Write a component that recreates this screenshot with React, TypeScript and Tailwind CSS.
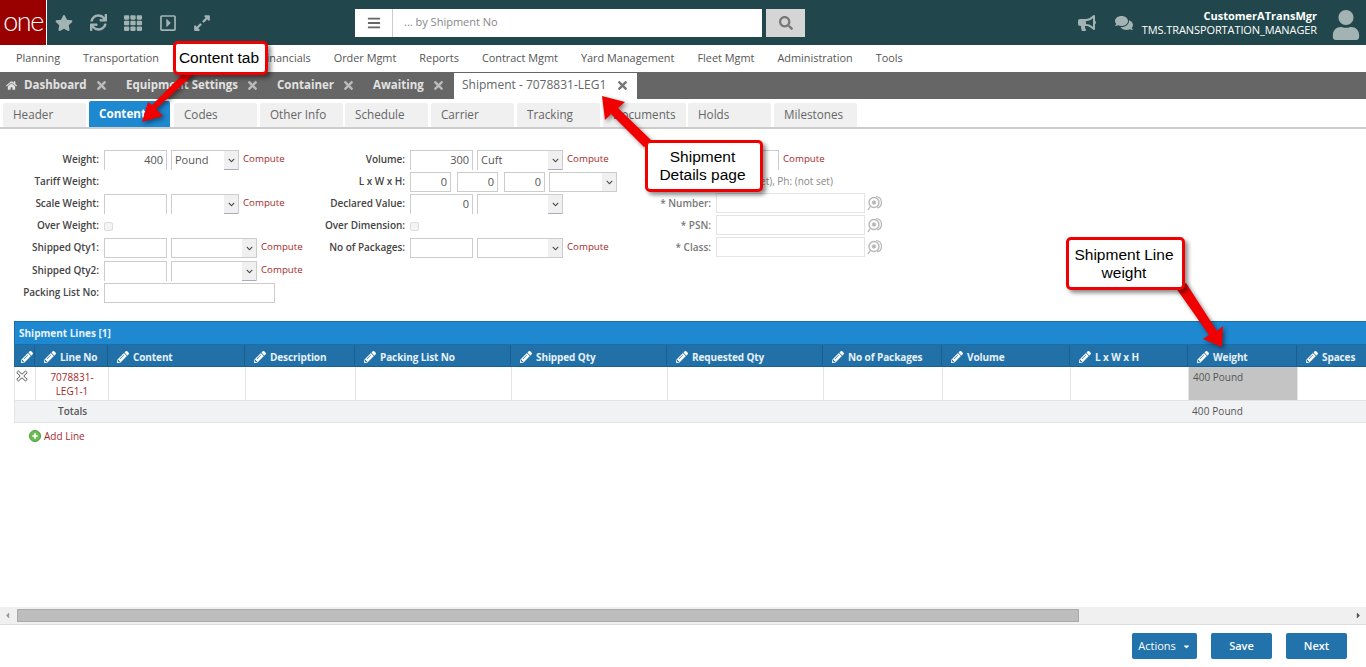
import React from "react";
import { FaStar, FaSync, FaTh, FaRegCaretSquareRight, FaExpandAlt, FaBullhorn, FaComments, FaUser, FaBars, FaSearch, FaPencilAlt, FaHome, FaTimes, FaChevronDown, FaCaretDown, FaCaretLeft, FaCaretRight } from "react-icons/fa";

const nav: [string, string][] = [["Planning", ""], ["Transportation", ""], ["", "w-[56px]"], ["Financials", ""], ["Order Mgmt", ""], ["Reports", ""], ["Contract Mgmt", ""], ["Yard Management", ""], ["Fleet Mgmt", ""], ["Administration", ""], ["Tools", ""]];
const subTabs: [string, string][] = [["Header", "w-[83px] mr-[3px]"], ["Content", "w-[81px] mr-[4px]"], ["Codes", "w-[83px] mr-[3px]"], ["Other Info", "w-[83px] mr-[2px]"], ["Schedule", "w-[83px] mr-[3px]"], ["Carrier", "w-[83px] mr-[3px]"], ["Tracking", "w-[83px] mr-[3px]"], ["Documents", "w-[83px] mr-[2px]"], ["Holds", "w-[83px] mr-[3px]"], ["Milestones", "w-[83px]"]];
const cols: [string, string][] = [["", "w-[20px]"], ["Line No", "w-[73px]"], ["Content", "w-[137px]"], ["Description", "w-[110px]"], ["Packing List No", "w-[156px]"], ["Shipped Qty", "w-[156px]"], ["Requested Qty", "w-[156px]"], ["No of Packages", "w-[119px]"], ["Volume", "w-[128px]"], ["L x W x H", "w-[118px]"], ["Weight", "w-[109px]"], ["Spaces", "w-[80px]"]];

function Label({ children, w }: { children?: React.ReactNode; w: string }) {
  return <div className={`${w} mr-[5px] text-right text-[10px] font-semibold text-[#444] leading-[19px] shrink-0 tracking-[-0.03px]`}>{children}</div>;
}
function Input({ v, w, open }: { v?: string; w: string; open?: boolean }) {
  return <div className={`${w} h-[20px] border border-[#ccc] ${open ? "border-b-0" : ""} bg-white text-right pr-[3px] text-[11px] leading-[18px] text-[#555] shrink-0`}>{v}</div>;
}
function Select({ v, w, open }: { v?: string; w: string; open?: boolean }) {
  return (
    <div className={`${w} h-[20px] border border-[#ccc] ${open ? "border-b-0" : ""} bg-white flex ml-[4px] shrink-0`}>
      <div className="flex-1 pl-[3px] text-[11px] leading-[18px] text-[#555]">{v}</div>
      <div className={`w-[14px] bg-[#f0f0f0] flex items-center justify-center ${open ? "border-b border-[#aab]" : ""}`}><FaChevronDown className="text-[#444] text-[7px]" /></div>
    </div>
  );
}
function Compute() {
  return <span className="ml-[4px] text-[9.7px] text-[#a52a2a] leading-[18px] self-start">Compute</span>;
}
function Target() {
  return (
    <svg width="15" height="16" viewBox="0 0 15 16" className="ml-[2px] shrink-0" fill="none" stroke="#b8b8b8">
      <path d="M9 1.5 A6 6 0 0 1 14.5 7 A6 6 0 0 1 10 13" strokeWidth="1.2" />
      <circle cx="7" cy="7.5" r="5" strokeWidth="1.4" />
      <circle cx="7" cy="7.5" r="1.8" fill="#b8b8b8" strokeWidth="0.8" />
      <path d="M3.2 11.5 L1 15" strokeWidth="1.4" />
    </svg>
  );
}
function HazRow({ label, mt }: { label: string; mt: string }) {
  return (
    <div className={`flex items-center ${mt}`}>
      <div className="w-[52px] mr-[5px] text-right text-[10px] font-semibold text-[#777] shrink-0 whitespace-nowrap">{label}</div>
      <div className="w-[149px] h-[20px] border border-[#e4e4e4] bg-white" />
      <Target />
    </div>
  );
}
function Check() {
  return <div className="w-[9px] h-[9px] mt-[6px] border border-[#ddd] rounded-[2px] bg-[#f4f4f4]" />;
}
function Callout({ className, children }: { className: string; children: React.ReactNode }) {
  return (
    <div className={`absolute bg-white border-[3px] border-[#f00000] rounded-[5px] shadow-[3px_3px_4px_rgba(0,0,0,0.45)] flex items-center justify-center text-center text-[15.5px] leading-[18px] text-black font-['Liberation_Sans',sans-serif] ${className}`}>
      {children}
    </div>
  );
}

export default function App() {
  return (
    <div className="relative w-[1366px] h-[667px] overflow-hidden bg-white font-['Open_Sans',sans-serif] flex flex-col">
      {/* top bar */}
      <header className="h-[45px] bg-[#21474d] flex items-center shrink-0">
        <div className="w-[46px] h-[45px] bg-[#990000] flex items-center justify-center text-white text-[27px] tracking-[-1.5px] font-['Lato',sans-serif] font-light pb-[3px] shrink-0">one</div>
        <div className="w-[1px] h-[45px] bg-white shrink-0" />
        <div className="flex items-center text-[#a3b3b3] ml-[8px]">
          <FaStar className="text-[18px]" />
          <FaSync className="text-[17px] ml-[17px]" />
          <FaTh className="text-[18px] ml-[17px]" />
          <FaRegCaretSquareRight className="text-[18px] ml-[17px]" />
          <FaExpandAlt className="text-[18px] ml-[16px]" />
        </div>
        <div className="ml-[144px] w-[407px] h-[28px] bg-white flex items-center">
          <div className="w-[38px] h-[28px] border-r border-[#ccc] flex items-center justify-center text-[#666]"><FaBars className="text-[14px]" /></div>
          <span className="ml-[11px] pb-[1px] text-[11px] text-[#888]">... by Shipment No</span>
        </div>
        <div className="ml-[4px] w-[39px] h-[28px] bg-[#d5d5d5] flex items-center justify-center text-[#777]"><FaSearch className="text-[14px]" /></div>
        <div className="flex items-center text-[#a3b3b3] ml-[273px]">
          <FaBullhorn className="text-[18px]" />
          <FaComments className="text-[18px] ml-[19px]" />
        </div>
        <div className="ml-auto text-right text-white text-[11px] leading-[14px] mr-[14px]">
          <div className="font-bold">CustomerATransMgr</div>
          <div className="tracking-[-0.1px]">TMS.TRANSPORTATION_MANAGER</div>
        </div>
        <FaUser className="text-[#a3b3b3] text-[30px] mr-[5px] mt-[5px]" />
      </header>

      {/* main nav */}
      <nav className="h-[27px] flex items-center pl-[16px] gap-[23px] text-[10.9px] text-[#555] shrink-0 pb-[1px]">
        {nav.map(([n, w], i) => <span key={i} className={`${w} whitespace-nowrap`}>{n}</span>)}
      </nav>

      {/* open tabs */}
      <div className="h-[27px] bg-[#666] flex items-end pl-[6px] shrink-0">
        <div className="h-[26px] flex items-center pb-[2px] text-[#e2e2e2] font-bold text-[11.5px] whitespace-nowrap">
          <FaHome className="text-[11px] mr-[7px]" />
          <span className="w-[62px]">Dashboard</span>
          <FaTimes className="text-[13px] text-[#bbb] ml-[9px] mr-[18px]" />
          <span className="w-[111px]">Equipment Settings</span>
          <FaTimes className="text-[13px] text-[#bbb] ml-[9px] mr-[18px]" />
          <span className="w-[56px]">Container</span>
          <FaTimes className="text-[13px] text-[#bbb] ml-[9px] mr-[18px]" />
          <span className="w-[50px]">Awaiting</span>
          <FaTimes className="text-[13px] text-[#bbb] ml-[9px] mr-[9px]" />
        </div>
        <div className="w-[183px] h-[26px] bg-white flex items-center pb-[2px] pl-[8px] text-[12px] text-[#666] whitespace-nowrap">
          <span className="w-[144px]">Shipment - 7078831-LEG1</span>
          <FaTimes className="text-[13px] text-[#777] ml-[10px]" />
        </div>
      </div>

      {/* sub tabs */}
      <div className="h-[30px] border-b-2 border-[#ccc] flex items-end pl-[3px] shrink-0">
        {subTabs.map(([t, w]) => (
          <div key={t} className={`${w} rounded-t-[2px] text-[11.7px] shrink-0 ${t === "Content" ? "bg-[#1e88d0] text-white font-bold pl-[10px] h-[26px] leading-[24px]" : "bg-[#f0f0f0] text-[#666] pl-[10px] h-[24px] leading-[22px]"}`}>{t}</div>
        ))}
      </div>

      {/* form */}
      <div className="h-[192px] flex pt-[21px] shrink-0">
        <div className="w-[319px] shrink-0 flex flex-col">
          <div className="flex h-[20px]"><Label w="w-[99px]">Weight:</Label><Input v="400" w="w-[63px]" open /><Select v="Pound" w="w-[68px]" open /><Compute /></div>
          <div className="flex h-[20px] mt-[2px]"><Label w="w-[99px]">Tariff Weight:</Label></div>
          <div className="flex h-[20px] mt-[2px]"><Label w="w-[99px]">Scale Weight:</Label><Input w="w-[63px]" open /><Select w="w-[68px]" open /><Compute /></div>
          <div className="flex h-[20px] mt-[2px]"><Label w="w-[99px]">Over Weight:</Label><Check /></div>
          <div className="flex h-[20px] mt-[2px]"><Label w="w-[99px]">Shipped Qty1:</Label><Input w="w-[63px]" /><Select w="w-[86px]" /><Compute /></div>
          <div className="flex h-[20px] mt-[3px]"><Label w="w-[99px]">Shipped Qty2:</Label><Input w="w-[63px]" open /><Select w="w-[86px]" open /><Compute /></div>
          <div className="flex h-[20px] mt-[2px]"><Label w="w-[99px]">Packing List No:</Label><Input w="w-[171px]" /></div>
        </div>
        <div className="w-[340px] shrink-0 flex flex-col">
          <div className="flex h-[20px]"><Label w="w-[86px]">Volume:</Label><Input v="300" w="w-[63px]" open /><Select v="Cuft" w="w-[86px]" open /><Compute /></div>
          <div className="flex h-[20px] mt-[2px]">
            <Label w="w-[86px]">L x W x H:</Label><Input v="0" w="w-[41px]" /><div className="w-[6px]" /><Input v="0" w="w-[41px]" /><div className="w-[6px]" /><Input v="0" w="w-[41px]" /><Select w="w-[68px]" />
          </div>
          <div className="flex h-[20px] mt-[2px]"><Label w="w-[86px]">Declared Value:</Label><Input v="0" w="w-[63px]" open /><Select w="w-[86px]" open /></div>
          <div className="flex h-[20px] mt-[2px]"><Label w="w-[86px]">Over Dimension:</Label><Check /></div>
          <div className="flex h-[20px] mt-[2px]"><Label w="w-[86px]">No of Packages:</Label><Input w="w-[63px]" /><Select w="w-[86px]" /><Compute /></div>
        </div>
        <div className="flex-1 flex flex-col">
          <div className="flex h-[20px] pl-[100px]"><div className="w-[20px] h-[20px] border border-[#ccc] border-b-0 border-l-0" /><Compute /></div>
          <div className="h-[20px] pl-[75px] text-[10px] leading-[22px] text-[#888]">(not set), Ph: (not set)</div>
          <HazRow label="* Number:" mt="mt-[3px]" />
          <HazRow label="* PSN:" mt="mt-[2px]" />
          <HazRow label="* Class:" mt="mt-[2px]" />
        </div>
      </div>

      {/* grid */}
      <div className="ml-[14px] w-[1352px] overflow-hidden shrink-0">
        <div className="h-[24px] bg-[#1e88d0] border border-[#1a6fa8] border-r-0 pl-[4px] text-[10px] font-bold text-[#e8f4fc] leading-[22px]">Shipment Lines [1]</div>
        <div className="h-[22px] bg-[#2270a8] border-b border-[#1a5f90] flex pl-[1px] w-[1400px]">
          {cols.map(([c, w], i) => (
            <div key={i} className={`${w} shrink-0 border-r border-[#1a5f90] flex items-center pt-[3px] text-[10px] font-bold tracking-[-0.1px] text-[#e8f2f8] whitespace-nowrap ${i === 0 ? "justify-end pr-[1px]" : "pl-[9px]"}`}>
              <FaPencilAlt className={`text-[12px] text-white ${i === 0 ? "" : "mr-[4px]"}`} />{c}
            </div>
          ))}
        </div>
        <div className="h-[34px] flex pl-[1px] w-[1400px] border-l border-[#e4e4e4] border-b border-b-[#e4e4e4]">
          {cols.map(([c, w], i) => (
            <div key={i} className={`${w} shrink-0 ${i === cols.length - 1 ? "" : "border-r border-[#e4e4e4]"} text-[10px] leading-[14px] text-[#555] ${i === 10 ? "bg-[#c4c4c4] pl-[4px] pt-[3px]" : ""} ${i === 1 ? "text-center text-[#a52a2a] pt-[3px]" : ""}`}>
              {i === 0 && (
                <svg width="12" height="12" viewBox="0 0 12 12" className="mt-[3px]" fill="none" stroke="#555" strokeWidth="1">
                  <path d="M2.5 1 L6 4.2 L9.5 1 L11.2 2.6 L7.8 6 L11.2 9.4 L9.5 11 L6 7.8 L2.5 11 L0.8 9.4 L4.2 6 L0.8 2.6 Z" />
                </svg>
              )}
              {i === 1 && <>7078831-<br />LEG1-1</>}
              {i === 10 && "400 Pound"}
            </div>
          ))}
        </div>
        <div className="h-[22px] bg-[#f1f2f4] border-b border-l border-[#e4e4e4] flex items-center text-[10px] text-[#555] w-[1400px]">
          <span className="ml-[43px] w-[1134px] font-semibold">Totals</span>
          <span className="tracking-[0.1px]">400 Pound</span>
        </div>
      </div>
      <div className="flex items-center ml-[29px] mt-[6px] h-[14px] shrink-0">
        <svg width="12" height="12" viewBox="0 0 13 13">
          <circle cx="6.5" cy="6.5" r="6" fill="#6cbb55" stroke="#4b9a3a" />
          <path d="M6.5 3.5 V9.5 M3.5 6.5 H9.5" stroke="#fff" strokeWidth="1.8" />
        </svg>
        <span className="ml-[3px] text-[10px] text-[#a52a2a]">Add Line</span>
      </div>

      <div className="flex-1" />

      {/* scrollbar */}
      <div className="h-[18px] bg-[#f0f0f0] border-b border-[#ddd] flex items-center shrink-0">
        <FaCaretLeft className="text-[9px] text-[#999] ml-[3px]" />
        <div className="ml-[5px] w-[1062px] h-[13px] bg-[#bdbdbd] border border-[#aaa]" />
        <FaCaretRight className="text-[9px] text-[#555] ml-auto mr-[3px]" />
      </div>

      {/* footer */}
      <div className="h-[42px] flex justify-end items-center pr-[19px] shrink-0">
        <div className="w-[65px] h-[26px] mr-[14px] bg-[#2272ab] rounded-[2px] text-white text-[11px] flex items-center justify-center">Actions<FaCaretDown className="text-[9px] ml-[6px]" /></div>
        <div className="w-[61px] h-[26px] mr-[14px] bg-[#2272ab] rounded-[2px] text-white text-[11px] flex items-center justify-center font-semibold">Save</div>
        <div className="w-[61px] h-[26px] bg-[#2272ab] rounded-[2px] text-white text-[11px] flex items-center justify-center font-semibold">Next</div>
      </div>

      {/* annotation arrows */}
      <svg className="absolute left-0 top-0 pointer-events-none drop-shadow-[2px_2px_2px_rgba(0,0,0,0.45)]" width="1366" height="667">
        <g fill="#f00000">
          <path d="M187 70 L193 75 L156 109 L163 116 L142 122 L148 102 L152 105 Z" />
          <path d="M602 96 L625 102 L618 108 L652 141 L644 147 L611 114 L605 120 Z" />
          <path d="M1176 288 L1186 283 L1217 331 L1223 326 L1222 347 L1203 339 L1209 335 Z" />
        </g>
      </svg>

      <Callout className="left-[173px] top-[41px] w-[95px] h-[34px] pr-[3px]">Content tab</Callout>
      <Callout className="left-[645px] top-[140px] w-[118px] h-[52px] pr-[3px]"><span>Shipment<br />Details page</span></Callout>
      <Callout className="left-[1066px] top-[237px] w-[119px] h-[53px] pr-[3px]"><span>Shipment Line<br />weight</span></Callout>
    </div>
  );
}
